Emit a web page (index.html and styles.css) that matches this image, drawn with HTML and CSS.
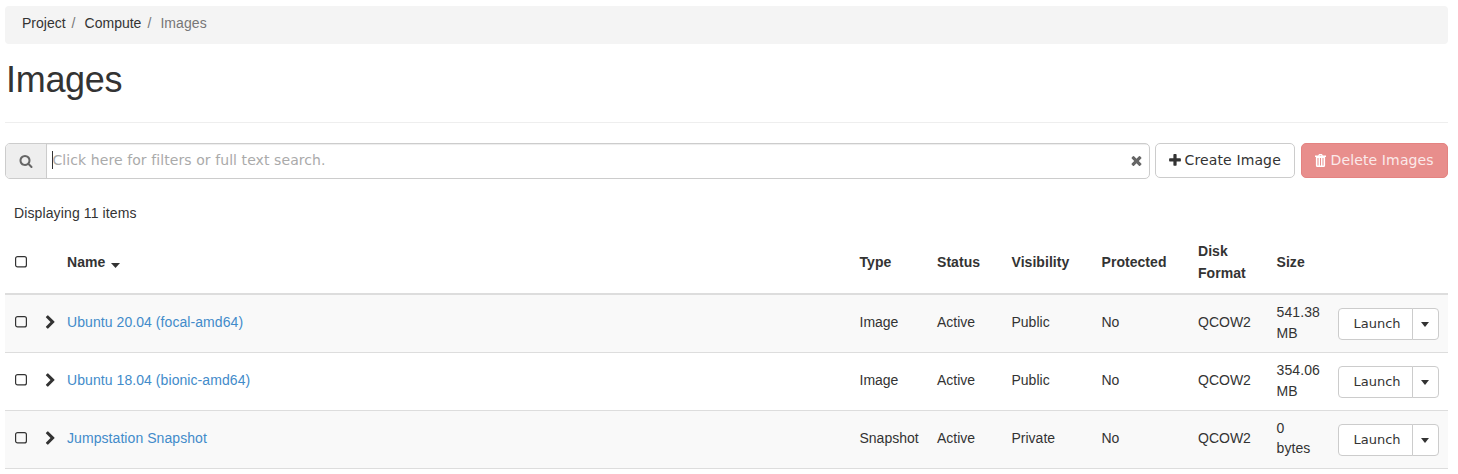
FILE: index.html
```
<!DOCTYPE html>
<html lang="en">
<head>
<meta charset="utf-8">
<title>Images</title>
<link rel="stylesheet" href="styles.css">
</head>
<body>
<svg class="defs" width="0" height="0">
  <symbol id="search" viewBox="0 0 1792 1792"><path d="M1216 832q0-185-131.5-316.5t-316.5-131.5-316.5 131.5-131.5 316.5 131.5 316.5 316.5 131.5 316.5-131.5 131.5-316.5zm512 832q0 52-38 90t-90 38q-54 0-90-38l-343-342q-179 124-399 124-143 0-273.5-55.5t-225-150-150-225-55.5-273.5 55.5-273.5 150-225 225-150 273.5-55.5 273.5 55.5 225 150 150 225 55.5 273.5q0 220-124 399l343 343q37 37 37 90z"/></symbol>
  <symbol id="times" viewBox="0 0 1792 1792"><path d="M1490 1322q0 40-28 68l-136 136q-28 28-68 28t-68-28l-294-294-294 294q-28 28-68 28t-68-28l-136-136q-28-28-28-68t28-68l294-294-294-294q-28-28-28-68t28-68l136-136q28-28 68-28t68 28l294 294 294-294q28-28 68-28t68 28l136 136q28 28 28 68t-28 68l-294 294 294 294q28 28 28 68z"/></symbol>
  <symbol id="plus" viewBox="192 0 1408 1792"><path d="M1600 736v192q0 40-28 68t-68 28h-416v416q0 40-28 68t-68 28h-192q-40 0-68-28t-28-68v-416h-416q-40 0-68-28t-28-68v-192q0-40 28-68t68-28h416v-416q0-40 28-68t68-28h192q40 0 68 28t28 68v416h416q40 0 68 28t28 68z"/></symbol>
  <symbol id="trash" viewBox="0 0 11 13"><path fill-rule="evenodd" d="M3.2 1.6L3.9.3Q4.1 0 4.5 0h2q.4 0 .6.3l.7 1.3H11v1.3h-.9v8.6q0 1.5-1.4 1.5H2.3Q.9 13 .9 11.500V2.900H0V1.600zM4.500 1.600h2l-.3-.6H4.800zM2.500 4v7.500h1V4zM5 4v7.500h1V4zM7.500 4v7.500h1V4z"/></symbol>
  <symbol id="chevron" viewBox="0 0 1792 1792"><path d="M1363 877l-742 742q-19 19-45 19t-45-19l-166-166q-19-19-19-45t19-45l531-531-531-531q-19-19-19-45t19-45l166-166q19-19 45-19t45 19l742 742q19 19 19 45t-19 45z"/></symbol>
  <symbol id="box" viewBox="0 0 12 12"><rect x=".6" y=".6" width="10.8" height="10.3" rx="2" fill="none" stroke="currentColor" stroke-width="1.2"/></symbol>
  <symbol id="caret" viewBox="0 0 8 4" preserveAspectRatio="none"><path d="M0 0h8L4 4z"/></symbol>
</svg>

<nav class="breadcrumb"><a>Project</a><span class="sep">/</span><a>Compute</a><span class="sep">/</span><span class="current">Images</span></nav>
<h1 class="title">Images</h1>

<div class="toolbar">
  <div class="search">
    <span class="addon"><svg class="icon"><use href="#search"/></svg></span>
    <div class="field"><span class="cursor"></span><span class="placeholder">Click here for filters or full text search.</span><svg class="icon clear"><use href="#times"/></svg></div>
  </div>
  <button class="btn create"><svg class="btn-icon"><use href="#plus"/></svg>Create Image</button>
  <button class="btn danger"><svg class="btn-icon trash"><use href="#trash"/></svg>Delete Images</button>
</div>

<p class="count">Displaying 11 items</p>

<div class="table">
  <div class="row head">
    <svg class="check"><use href="#box"/></svg><span></span>
    <span class="name">Name <svg class="sort"><use href="#caret"/></svg></span>
    <span>Type</span><span>Status</span><span>Visibility</span><span>Protected</span><span class="format">Disk<br>Format</span><span>Size</span><span></span>
  </div>
  <div class="row odd">
    <svg class="check"><use href="#box"/></svg><svg class="chev"><use href="#chevron"/></svg>
    <a class="link">Ubuntu 20.04 (focal-amd64)</a>
    <span>Image</span><span>Active</span><span>Public</span><span>No</span><span>QCOW2</span><span class="size">541.38<br>MB</span>
    <div class="actions"><button class="launch">Launch</button><button class="more"><svg class="caret"><use href="#caret"/></svg></button></div>
  </div>
  <div class="row">
    <svg class="check"><use href="#box"/></svg><svg class="chev"><use href="#chevron"/></svg>
    <a class="link">Ubuntu 18.04 (bionic-amd64)</a>
    <span>Image</span><span>Active</span><span>Public</span><span>No</span><span>QCOW2</span><span class="size">354.06<br>MB</span>
    <div class="actions"><button class="launch">Launch</button><button class="more"><svg class="caret"><use href="#caret"/></svg></button></div>
  </div>
  <div class="row odd">
    <svg class="check"><use href="#box"/></svg><svg class="chev"><use href="#chevron"/></svg>
    <a class="link">Jumpstation Snapshot</a>
    <span>Snapshot</span><span>Active</span><span>Private</span><span>No</span><span>QCOW2</span><span class="size bytes">0<br>bytes</span>
    <div class="actions"><button class="launch">Launch</button><button class="more"><svg class="caret"><use href="#caret"/></svg></button></div>
  </div>
</div>
</body>
</html>
```
FILE: styles.css
```
* { box-sizing: border-box; }
body {
  margin: 0;
  padding: 6px 10px 0 5px;
  background: #fff;
  color: #333;
  font: 14px/20px "Liberation Sans", Arial, sans-serif;
  overflow: hidden;
}
svg { fill: currentColor; flex: none; }
.defs { position: absolute; }
.breadcrumb {
  display: flex;
  height: 38px;
  padding: 7px 17px;
  background: #f4f4f4;
  border-radius: 4px;
}
.sep { width: 19px; padding-left: 6px; color: #777; }
.current { color: #777; letter-spacing: .07px; }
.title {
  margin: 0;
  height: 79px;
  padding: 16px 0 0 1px;
  border-bottom: 1px solid #eee;
  font-size: 36px;
  line-height: 40px;
  font-weight: 400;
  letter-spacing: -.3px;
}
.toolbar {
  display: flex;
  align-items: flex-start;
  margin-top: 20px;
  font-family: "DejaVu Sans", sans-serif;
}
.search {
  display: flex;
  width: 1145px;
  height: 36px;
  margin-right: 5px;
  border: 1px solid #ccc;
  border-radius: 5px;
  overflow: hidden;
}
.addon {
  display: flex;
  align-items: center;
  justify-content: center;
  width: 41px;
  background: #eee;
  border-right: 1px solid #ccc;
  color: #666;
}
.icon { width: 14px; height: 14px; }
.field {
  display: flex;
  flex: 1;
  align-items: center;
  padding: 0 5px 2px 5px;
  box-shadow: inset 0 1px 1px rgba(0, 0, 0, .075);
}
.cursor { width: 1px; height: 18px; background: #333; }
.placeholder { flex: 1; margin-left: -.5px; color: #aaa; letter-spacing: .08px; }
.clear { width: 15px; height: 15px; margin-top: 1px; color: #666; }
.btn {
  display: flex;
  align-items: center;
  height: 35px;
  padding: 0 0 1px 13px;
  border: 1px solid #ccc;
  border-radius: 5px;
  background: #fff;
  color: #333;
  font: 14px/20px "DejaVu Sans", sans-serif;
  letter-spacing: .13px;
  white-space: nowrap;
}
.create { width: 140px; margin-right: 6px; }
.danger { width: 147px; background: #e88e8c; border-color: #e48381; color: #fbeaea; }
.btn-icon { width: 12px; height: 15px; margin-right: 3.5px; }
.trash { width: 11px; height: 13px; margin-right: 4.5px; color: #fff; }
.count { margin: 24px 0 8px 9px; letter-spacing: .12px; }
.row {
  display: grid;
  grid-template-columns: 30px 22px 792.5px 77.5px 74.5px 90px 96.5px 78.5px 61.5px 110px;
  align-items: center;
  height: 58px;
  padding: 0 0 3px 10px;
  border-bottom: 1px solid #ddd;
}
.odd { background: #f9f9f9; }
.head { height: 64px; padding-bottom: 0; border-bottom-width: 2px; font-weight: 700; letter-spacing: .05px; }
.check { width: 12px; height: 12px; }
.chev { width: 15px; height: 15px; margin-left: -2px; margin-top: 1px; }
.sort { width: 9px; height: 5px; margin-left: 1.5px; vertical-align: -1px; }
.format { line-height: 22px; }
.size { line-height: 20.5px; margin-top: 1px; letter-spacing: .1px; }
.bytes { line-height: 20px; margin-top: 0; }
.link { color: #428bca; letter-spacing: .07px; }
.actions { display: flex; height: 32px; margin-top: 4px; }
.launch, .more {
  height: 32px;
  padding: 0 0 1px 3px;
  border: 1px solid #ccc;
  background: #fff;
  color: #333;
  font: 13px/18px "DejaVu Sans", sans-serif;
}
.launch { width: 75px; border-radius: 4px 0 0 4px; }
.more {
  display: flex;
  align-items: center;
  justify-content: center;
  width: 27px;
  padding: 0 1px 0 0;
  margin-left: -1px;
  border-radius: 0 4px 4px 0;
}
.caret { width: 8px; height: 5px; }
```
